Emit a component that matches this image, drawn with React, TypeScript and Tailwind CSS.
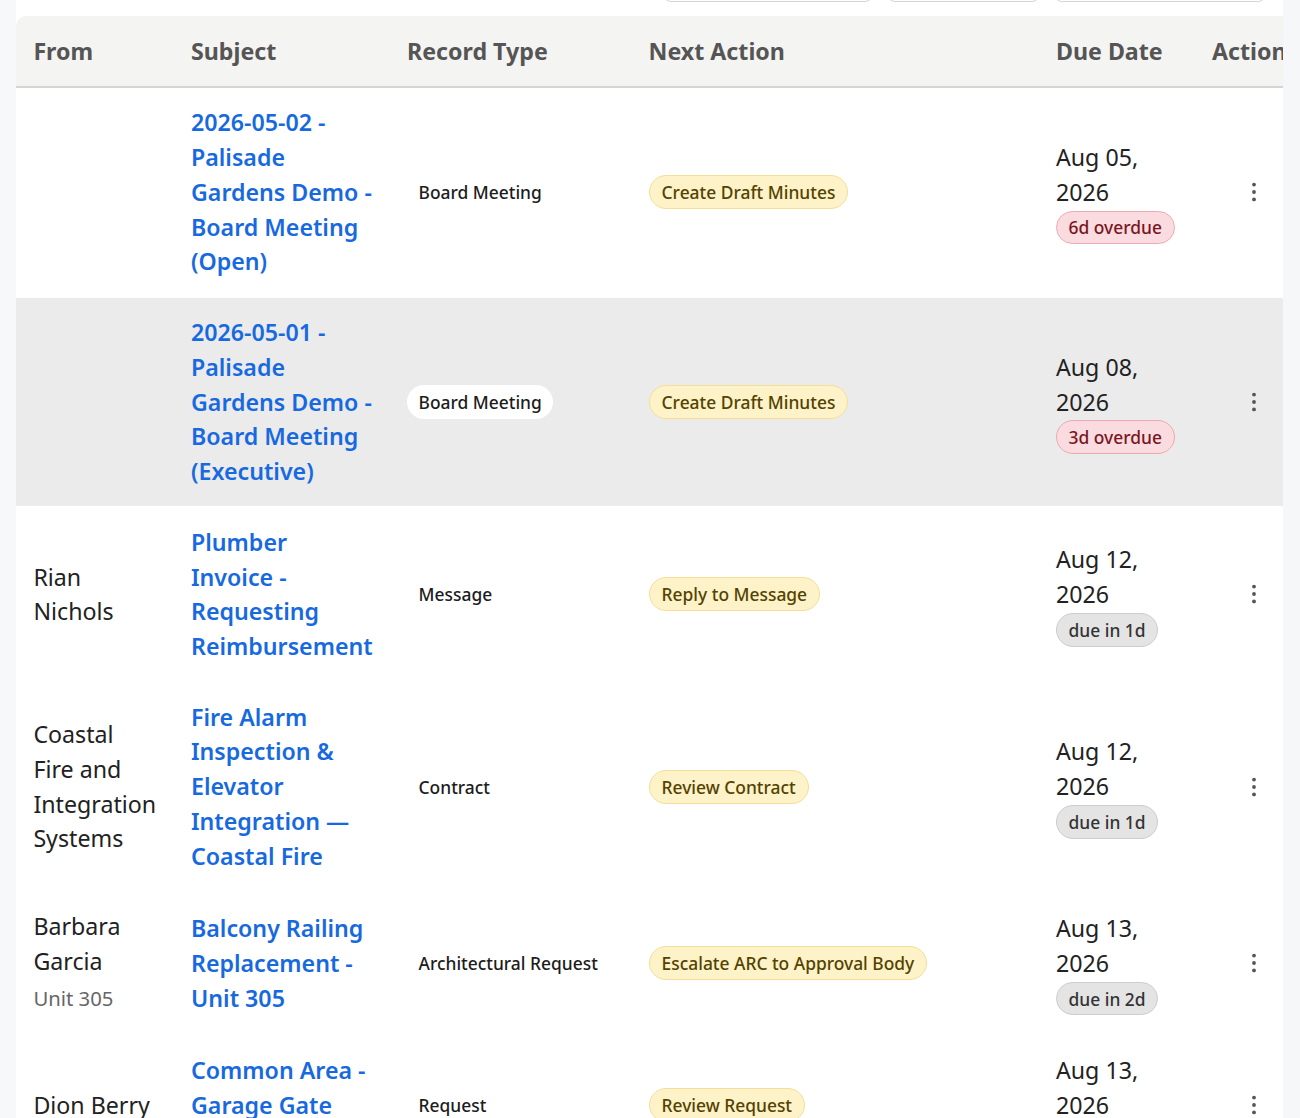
import React from "react";

type Badge = { text: string; kind: "red" | "gray" };
type Row = {
  from: string;
  unit?: string;
  subject: string;
  type: string;
  action: string;
  date: string;
  badge: Badge;
  hovered?: boolean;
};

const rows: Row[] = [
  {
    from: "",
    subject: "2026-05-02 - Palisade Gardens Demo - Board Meeting (Open)",
    type: "Board Meeting",
    action: "Create Draft Minutes",
    date: "Aug 05, 2026",
    badge: { text: "6d overdue", kind: "red" },
  },
  {
    from: "",
    subject: "2026-05-01 - Palisade Gardens Demo - Board Meeting (Executive)",
    type: "Board Meeting",
    action: "Create Draft Minutes",
    date: "Aug 08, 2026",
    badge: { text: "3d overdue", kind: "red" },
    hovered: true,
  },
  {
    from: "Rian Nichols",
    subject: "Plumber Invoice - Requesting Reimbursement",
    type: "Message",
    action: "Reply to Message",
    date: "Aug 12, 2026",
    badge: { text: "due in 1d", kind: "gray" },
  },
  {
    from: "Coastal Fire and Integration Systems",
    subject: "Fire Alarm Inspection & Elevator Integration — Coastal Fire",
    type: "Contract",
    action: "Review Contract",
    date: "Aug 12, 2026",
    badge: { text: "due in 1d", kind: "gray" },
  },
  {
    from: "Barbara Garcia",
    unit: "Unit 305",
    subject: "Balcony Railing Replacement - Unit 305",
    type: "Architectural Request",
    action: "Escalate ARC to Approval Body",
    date: "Aug 13, 2026",
    badge: { text: "due in 2d", kind: "gray" },
  },
  {
    from: "Dion Berry",
    subject: "Common Area - Garage Gate Repair",
    type: "Request",
    action: "Review Request",
    date: "Aug 13, 2026",
    badge: { text: "due in 2d", kind: "gray" },
  },
];

function Kebab() {
  return (
    <svg width="6" height="20" viewBox="0 0 6 20" className="block">
      <circle cx="3" cy="2.6" r="1.9" fill="#555" />
      <circle cx="3" cy="10" r="1.9" fill="#555" />
      <circle cx="3" cy="17.4" r="1.9" fill="#555" />
    </svg>
  );
}

export default function App() {
  return (
    <div
      className="flex w-[1300px] min-h-[1118px] bg-[#f6f7f9] overflow-hidden"
      style={{ fontFamily: '"Noto Sans", "Open Sans", sans-serif' }}
    >
      <div className="w-[16px] shrink-0 bg-[#f7f8fa]" />
      <div className="w-[1267px] shrink-0 bg-white overflow-hidden">
        {/* filter inputs (bottom edges only visible) */}
        <div className="h-[16px] pb-[14px] overflow-hidden flex items-end pl-[647px] gap-[14px]">
          <div className="h-[40px] w-[210px] shrink-0 rounded-[8px] border border-[#d4d4d4]" />
          <div className="h-[40px] w-[153px] shrink-0 rounded-[8px] border border-[#d4d4d4]" />
          <div className="h-[40px] w-[212px] shrink-0 rounded-[8px] border border-[#d4d4d4]" />
        </div>
        <table className="table-fixed border-collapse w-[1289px]">
          <colgroup>
            <col className="w-[157.6px]" />
            <col className="w-[216px]" />
            <col className="w-[241.6px]" />
            <col className="w-[407.4px]" />
            <col className="w-[156px]" />
            <col className="w-[110.4px]" />
          </colgroup>
          <thead>
            <tr className="bg-[#f4f4f2] border-b-2 border-[#d5d5d5]">
              {["From", "Subject", "Record Type", "Next Action", "Due Date", "Action"].map((h, i) => (
                <th
                  key={h}
                  className={`text-left font-bold text-[#555555] text-[23.2px] leading-[34.8px] pt-[18px] pb-[17px] pl-[17.4px] pr-[10px] whitespace-nowrap ${
                    i === 0 ? "rounded-tl-[10px]" : ""
                  }`}
                >
                  {h}
                </th>
              ))}
            </tr>
          </thead>
          <tbody>
            {rows.map((r, idx) => (
              <tr
                key={idx}
                className={`border-b-[1.5px] border-white ${r.hovered ? "bg-[#ebebeb]" : "bg-white"}`}
              >
                <td className="align-middle py-[17.4px] pl-[17.4px] pr-[15px] text-[23.2px] leading-[34.8px] text-[#222222]">
                  {r.from}
                  {r.unit && (
                    <div className="text-[20.3px] leading-[38px] text-[#666666]">{r.unit}</div>
                  )}
                </td>
                <td className="align-middle py-[17.4px] pl-[17.4px] pr-[16.5px]">
                  <a className="text-[23.2px] leading-[34.8px] font-semibold text-[#1769e0] block">
                    {r.subject}
                  </a>
                </td>
                <td className="align-middle py-[17.4px] pl-[17.4px] pr-[10px]">
                  <span className="inline-block rounded-full bg-white px-[11.6px] py-[3.6px] text-[17.4px] leading-[26.1px] font-medium text-[#1c1c1c] whitespace-nowrap">
                    {r.type}
                  </span>
                </td>
                <td className="align-middle py-[17.4px] pl-[17.4px] pr-[10px]">
                  <span className="inline-block rounded-full bg-[#fdf2c8] border-[1.45px] border-[#f5df98] px-[12px] py-[2.9px] text-[17.4px] leading-[26.1px] font-medium text-[#544200] whitespace-nowrap">
                    {r.action}
                  </span>
                </td>
                <td className="align-middle py-[17.4px] pl-[17.4px] pr-[10px]">
                  <div className="text-[23.2px] leading-[34.8px] text-[#222222]">{r.date}</div>
                  <div className="mt-[1px] flex">
                    <span
                      className={`rounded-full border-[1.45px] px-[11.6px] py-[2.9px] text-[17.4px] leading-[26.1px] font-medium whitespace-nowrap ${
                        r.badge.kind === "red"
                          ? "bg-[#fadce0] border-[#efa9b2] text-[#7a1522]"
                          : "bg-[#e4e4e4] border-[#cdcdcd] text-[#333333]"
                      }`}
                    >
                      {r.badge.text}
                    </span>
                  </div>
                </td>
                <td className="align-middle py-[17.4px] pl-[17.4px]">
                  <div className="ml-[39px] w-[6px]">
                    <Kebab />
                  </div>
                </td>
              </tr>
            ))}
          </tbody>
        </table>
      </div>
      <div className="flex-1 bg-[#f6f7f9]" />
    </div>
  );
}
